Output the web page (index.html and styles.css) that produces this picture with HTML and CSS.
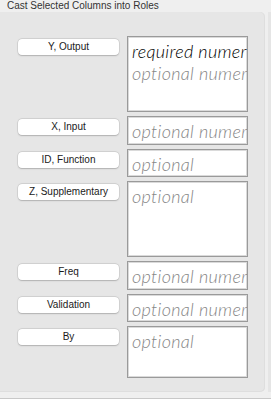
FILE: index.html
```html
<!DOCTYPE html>
<html>
<head>
<meta charset="utf-8">
<link rel="stylesheet" href="styles.css">
</head>
<body>
<div class="page">
  <div class="title">Cast Selected Columns into Roles</div>
  <div class="main">
    <div class="panel">
      <div class="roles">
        <div class="btn">Y, Output</div>
        <div class="box h76"><div class="req">required numeric</div><div class="opt">optional numeric</div></div>
        <div class="btn">X, Input</div>
        <div class="box h29"><div class="opt">optional numeric</div></div>
        <div class="btn">ID, Function</div>
        <div class="box h28"><div class="opt">optional</div></div>
        <div class="btn">Z, Supplementary</div>
        <div class="box h76"><div class="opt">optional</div></div>
        <div class="btn">Freq</div>
        <div class="box h29"><div class="opt">optional numeric</div></div>
        <div class="btn">Validation</div>
        <div class="box h28"><div class="opt">optional numeric</div></div>
        <div class="btn">By</div>
        <div class="box h52"><div class="opt">optional</div></div>
      </div>
    </div>
    <div class="side"></div>
  </div>
  <div class="footer"></div>
</div>
</body>
</html>
```
FILE: styles.css
```css
html, body {
  margin: 0;
  padding: 0;
}
body {
  background: #efefef;
  width: 271px;
  height: 399px;
  overflow: hidden;
  font-family: "Liberation Sans", Arial, sans-serif;
  color: #222;
}
.page {
  display: flex;
  flex-direction: column;
  height: 399px;
}
.title {
  height: 12px;
  line-height: 12px;
  font-size: 10px;
  padding-left: 7px;
  color: #333;
  white-space: nowrap;
}
.main {
  display: flex;
  gap: 3px;
  height: 380px;
}
.panel {
  width: 265px;
  height: 380px;
  background: #e6e6e6;
  border-radius: 0 5px 5px 0;
  box-shadow: inset -1px 0 0 #dedede, inset 0 -1px 0 #dedede;
  box-sizing: border-box;
  padding: 24px 0 0 18px;
}
.side {
  width: 3px;
  height: 380px;
  background: #e5e5e5;
}
.roles {
  display: grid;
  grid-template-columns: 101px 121px;
  column-gap: 8px;
  row-gap: 4px;
  align-items: start;
}
.btn {
  margin-top: 3px;
  height: 16px;
  line-height: 16px;
  background: #fff;
  border-radius: 4px;
  box-shadow: 0 0 0 0.5px rgba(0,0,0,0.12), 0 0.5px 1.5px rgba(0,0,0,0.18);
  font-size: 10px;
  text-align: center;
  color: #1a1a1a;
  white-space: nowrap;
}
.box {
  box-sizing: border-box;
  background: #fff;
  border: 1px solid #9a9a9a;
  box-shadow: inset 0 0 0 1px #dadada;
  padding: 3px 0 0 4px;
  overflow: hidden;
  font-family: Lato, "Open Sans", sans-serif;
  font-style: italic;
  font-weight: 300;
  font-size: 18px;
  letter-spacing: 0.3px;
  line-height: 22px;
  white-space: nowrap;
}
.h76 { height: 76px; }
.h29 { height: 29px; }
.h28 { height: 28px; }
.h52 { height: 52px; }
.req { color: #000; }
.opt { color: #858585; }
.footer {
  margin-top: 6px;
  height: 1px;
  background: #c8c8c8;
}
```
